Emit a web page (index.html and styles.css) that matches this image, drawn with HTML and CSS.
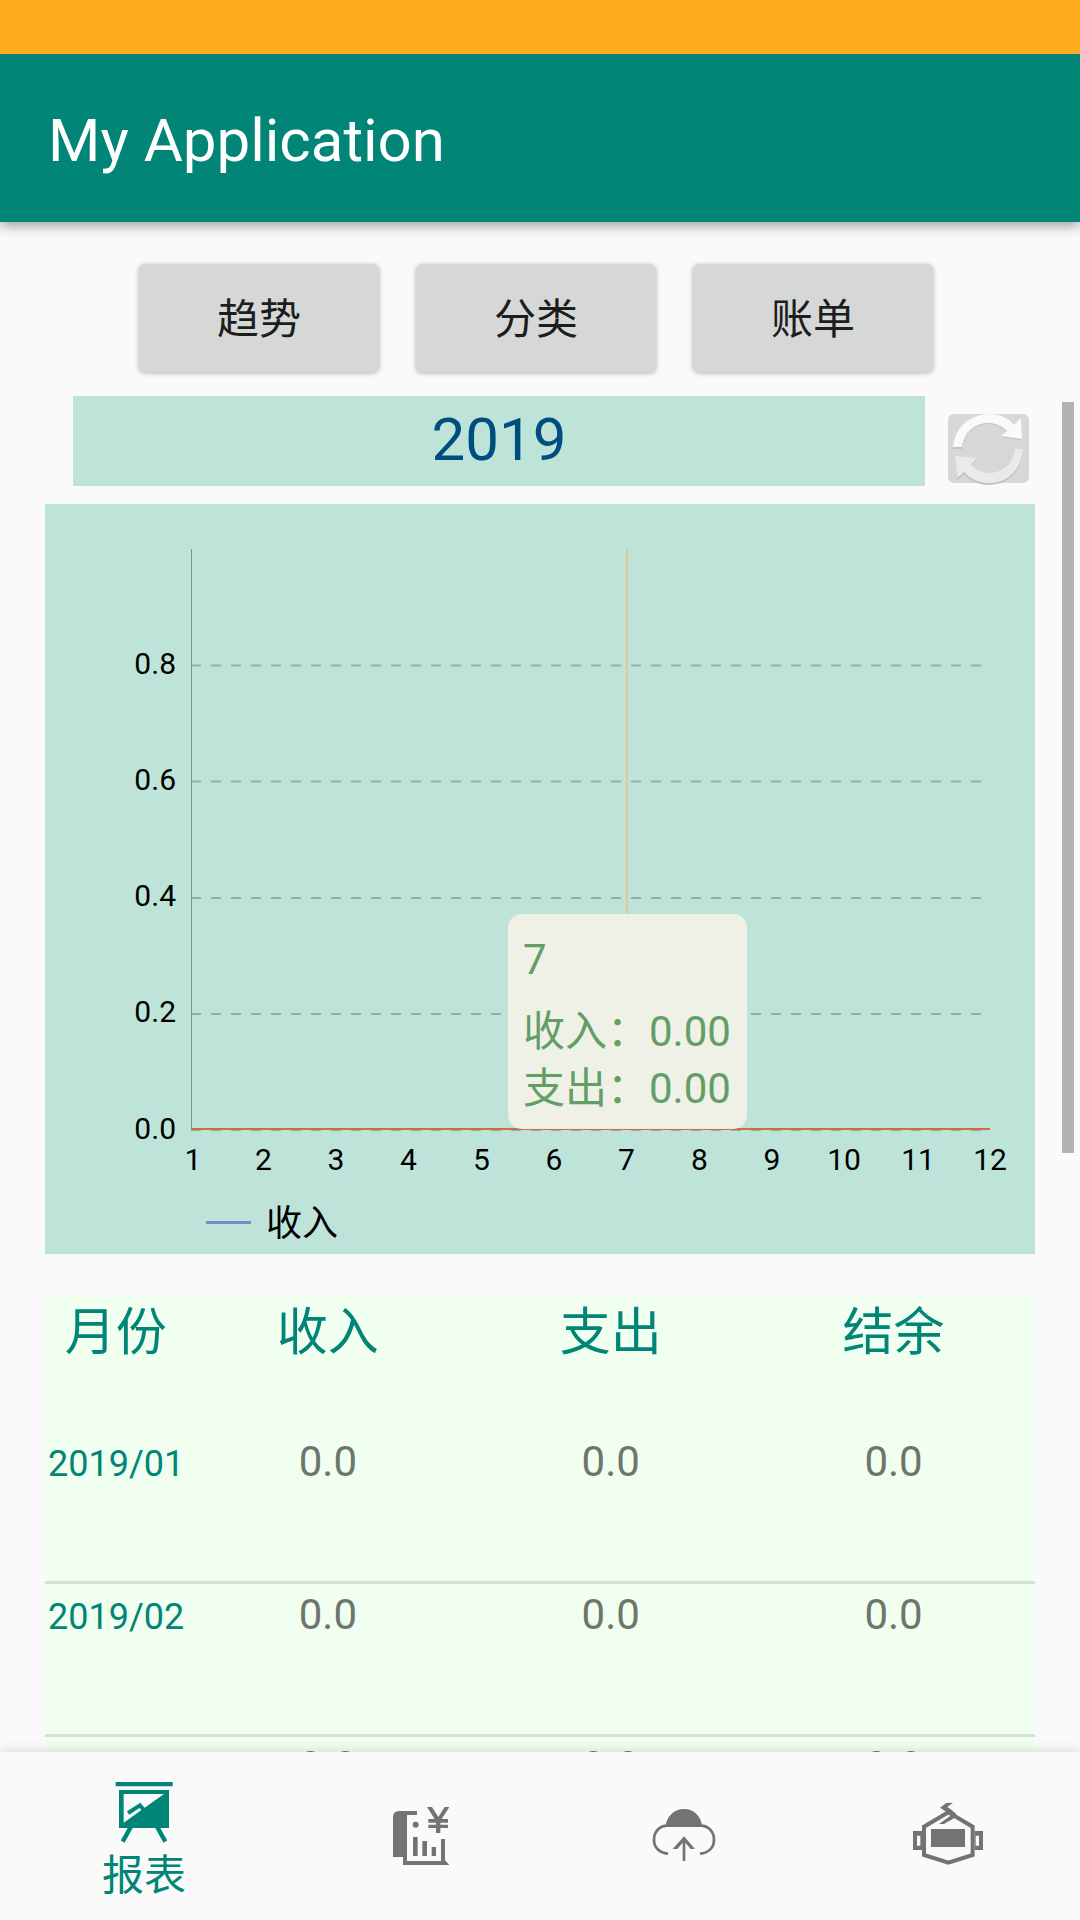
FILE: index.html
```html
<!DOCTYPE html>
<html lang="zh-CN">
<head>
    <meta charset="UTF-8">
    <meta name="viewport" content="width=device-width, initial-scale=1.0">
    <title>My Application</title>
    <link rel="stylesheet" href="styles.css">
</head>
<body>
    <div class="status-bar"></div>
    <header class="app-bar">
        <h1>My Application</h1>
    </header>

    <main class="content">
        <!-- tabs -->
        <div class="tabs">
            <button class="tab">趋势</button>
            <button class="tab">分类</button>
            <button class="tab">账单</button>
        </div>

        <!-- year + refresh -->
        <div class="year-row">
            <div class="year">2019</div>
            <button class="refresh">
                <svg width="81" height="72" viewBox="0 0 81 72">
                    <g class="refresh-shadow">
                        <path d="M5 35 C7 13 23 1 42 1 C52 1 60 5 66 12 L73 5 L74 26 L53 23 L59 18 C54 13 48 10 40 10 C27 10 16 19 14 35 Z"/>
                        <path d="M75 36 C74 57 60 71 41 71 C31 71 22 67 16 60 L9 66 L7 43 L29 45 L23 52 C28 57 34 60 41 60 C55 60 65 51 67 36 Z"/>
                    </g>
                    <path class="arrow-top" d="M5 33 C7 12 23 0 42 0 C52 0 60 4 66 11 L73 4 L74 25 L53 22 L59 17 C54 12 48 9 40 9 C27 9 16 18 14 33 Z"/>
                    <path class="arrow-bottom" d="M75 35 C74 55 60 69 41 69 C31 69 22 65 16 58 L9 64 L7 42 L29 44 L23 51 C28 56 34 59 41 59 C55 59 65 50 67 35 Z"/>
                </svg>
            </button>
        </div>

        <!-- line chart -->
        <section class="chart">
            <svg width="990" height="750" viewBox="0 0 990 750">
                <g class="grid">
                    <path d="M146 161.5 H937"/>
                    <path d="M146 277.5 H937"/>
                    <path d="M146 394 H937"/>
                    <path d="M146 510 H937"/>
                    <path d="M146 626 H937"/>
                </g>
                <path class="axis" d="M146.5 45 V626"/>
                <path class="series" d="M147 625 H945"/>
                <path class="cursor" d="M582 45 V624"/>
                <g class="labels-y">
                    <text x="131" y="170">0.8</text>
                    <text x="131" y="286">0.6</text>
                    <text x="131" y="402">0.4</text>
                    <text x="131" y="518">0.2</text>
                    <text x="131" y="635">0.0</text>
                </g>
                <g class="labels-x">
                    <text x="148" y="666">1</text>
                    <text x="218.5" y="666">2</text>
                    <text x="291" y="666">3</text>
                    <text x="363.5" y="666">4</text>
                    <text x="436.5" y="666">5</text>
                    <text x="509" y="666">6</text>
                    <text x="581.5" y="666">7</text>
                    <text x="654.5" y="666">8</text>
                    <text x="727" y="666">9</text>
                    <text x="799" y="666">10</text>
                    <text x="873" y="666">11</text>
                    <text x="945" y="666">12</text>
                </g>
                <path class="legend-line" d="M161 718.5 H206"/>
                <text class="legend-text" x="221" y="732">收入</text>
            </svg>
            <div class="tooltip">
                <p class="tooltip-title">7</p>
                <p>收入：0.00</p>
                <p>支出：0.00</p>
            </div>
        </section>

        <!-- monthly table -->
        <section class="table">
            <div class="row head">
                <span>月份</span><span>收入</span><span>支出</span><span>结余</span>
            </div>
            <div class="row">
                <span class="month">2019/01</span><span>0.0</span><span>0.0</span><span>0.0</span>
            </div>
            <div class="row">
                <span class="month">2019/02</span><span>0.0</span><span>0.0</span><span>0.0</span>
            </div>
            <div class="row last">
                <span class="month">2019/03</span><span>0.0</span><span>0.0</span><span>0.0</span>
            </div>
        </section>
        <div class="scrollbar"></div>
    </main>

    <nav class="bottom-nav">
        <a class="nav-item active">
            <svg width="72" height="72" viewBox="84 108 216 216">
                <path d="M107 126 H278 V139 H107 Z"/>
                <path fill-rule="evenodd" d="M117 150 H267 V264 H117 Z M131 162 V248 L196 202 L252 162 Z"/>
                <path class="line" d="M144 219 L180 196 L190 208"/>
                <path class="line thick" d="M153 260 L128 305 M231 260 L256 305"/>
            </svg>
            <span>报表</span>
        </a>
        <a class="nav-item">
            <svg width="72" height="72" viewBox="912 180 216 216">
                <path fill-rule="evenodd" d="M957 213 H1011 V225 H981 V363 H1083 V297 H1095 V361 L1108 375 H969 V351 H939 V231 Q939 213 957 213 Z"/>
                <circle cx="1007" cy="254" r="9"/>
                <path d="M999 291 H1013 V348 H999 Z M1027 303 H1041 V348 H1027 Z M1055 321 H1068 V348 H1055 Z"/>
                <path d="M1041 201 H1056 L1075 231 L1094 201 H1108 L1085 237 H1104 V248 H1081 V254 H1104 V264 H1081 V279 H1068 V264 H1045 V254 H1068 V248 H1045 V237 H1064 Z"/>
            </svg>
        </a>
        <a class="nav-item">
            <svg width="72" height="72" viewBox="84 180 216 216">
                <path d="M136 261 C140 228 162 207 192 207 C222 207 243 228 247 261 Z"/>
                <path class="line cloud" d="M144 341 C118 339 102 322 102 299 C102 274 120 257 142 257 H242 C265 257 282 275 282 299 C282 323 266 339 240 341"/>
                <path class="line cloud" d="M192 363 V296"/>
                <path d="M192 289 L225 327 H212 L192 304 L172 327 H158 Z"/>
            </svg>
        </a>
        <a class="nav-item">
            <svg width="72" height="72" viewBox="876 180 216 216">
                <path class="line" d="M985 217 L912 260 V345 L985 368 L1058 345 V260 Z"/>
                <path d="M933 267 H1035 V321 H933 Z"/>
                <path fill-rule="evenodd" d="M879 273 H906 V330 H879 Z M891 287 V317 H901 V287 Z M1064 273 H1089 V330 H1064 Z M1067 287 V317 H1077 V287 Z"/>
                <path d="M999 188 L982 201 L994 209 L1009 222 L1003 234 L972 252 H957 L995 225 L988 221 L960 203 L979 189 Z"/>
            </svg>
        </a>
    </nav>
</body>
</html>
```

FILE: styles.css
```css
* {
    box-sizing: border-box;
    margin: 0;
    padding: 0;
}

body {
    width: 1080px;
    height: 1920px;
    overflow: hidden;
    display: flex;
    flex-direction: column;
    background: #fafafa;
    font-family: Roboto, "Noto Sans CJK SC", sans-serif;
}

svg {
    display: block;
}

.status-bar {
    position: relative;
    z-index: 1;
    height: 54px;
    background: #ffad20;
}

.app-bar {
    height: 168px;
    padding-left: 48px;
    display: flex;
    align-items: center;
    background: #008577;
    box-shadow: 0 4px 12px rgba(0, 0, 0, 0.36);
}

.app-bar h1 {
    color: #fff;
    font-size: 60px;
    font-weight: 400;
    line-height: 70px;
    padding-top: 6px;
}

.content {
    height: 1530px;
    overflow: hidden;
    position: relative;
    padding: 42px 45px 0;
}

/* tabs */
.tabs {
    display: flex;
    gap: 37px;
    padding-left: 94px;
}

.tab {
    width: 240px;
    height: 108px;
    padding-bottom: 5px;
    border: none;
    border-radius: 6px;
    background: #d6d7d7;
    color: #1c1d1d;
    font-family: inherit;
    font-size: 42px;
    box-shadow: 0 1px 5px rgba(0, 0, 0, 0.3);
}

/* year */
.year-row {
    display: flex;
    height: 90px;
    margin-top: 24px;
    padding-left: 28px;
}

.year {
    width: 852px;
    height: 90px;
    line-height: 88px;
    text-align: center;
    font-size: 60px;
    color: #004d80;
    background: #bee4da;
}

.refresh {
    width: 81px;
    height: 69px;
    margin: 18px 0 0 23px;
    border: none;
    border-radius: 6px;
    background: #d6d7d7;
}

.refresh-shadow {
    fill: #c0c1c1;
}

.arrow-top {
    fill: #fafafa;
}

.arrow-bottom {
    fill: #e9eaea;
}

/* chart */
.chart {
    position: relative;
    height: 750px;
    margin-top: 18px;
    background: #bee4da;
}

.grid path {
    stroke: #93aea7;
    stroke-width: 2;
    stroke-dasharray: 10 10;
}

.axis {
    stroke: #7f8f8b;
    stroke-width: 1;
}

.series {
    stroke: #cd6d41;
    stroke-width: 2;
}

.cursor {
    stroke: #e3c78b;
    stroke-width: 2;
}

.labels-x,
.labels-y {
    font-size: 30px;
    fill: #000;
}

.labels-x {
    text-anchor: middle;
}

.labels-y {
    text-anchor: end;
}

.legend-line {
    stroke: #7191c6;
    stroke-width: 3;
}

.legend-text {
    font-size: 36px;
}

.tooltip {
    position: absolute;
    left: 463px;
    top: 410px;
    width: 239px;
    height: 215px;
    padding: 17px 0 0 15px;
    border-radius: 14px;
    background: rgba(241, 241, 232, 0.95);
    color: #629e66;
    font-size: 42px;
    line-height: 57px;
    white-space: nowrap;
}

.tooltip-title {
    margin-bottom: 15px;
}

/* table */
.table {
    margin-top: 42px;
    background: #f0fff0;
}

.row {
    display: grid;
    grid-template-columns: 1fr 2fr 2fr 2fr;
    height: 153px;
    align-items: baseline;
    padding-top: 6px;
    border-bottom: 3px solid #d3e1d3;
    text-align: center;
    font-size: 42px;
    line-height: 50px;
    color: #6c766c;
}

.row .month {
    font-size: 36px;
    text-align: left;
    padding-left: 3px;
    color: #008577;
}

.row.head {
    height: 135px;
    padding-top: 2px;
    border-bottom: none;
    font-size: 51px;
    line-height: 70px;
    color: #008577;
}

.row.last {
    padding-top: 5px;
}

.scrollbar {
    position: absolute;
    right: 6px;
    top: 180px;
    width: 12px;
    height: 751px;
    background: #b2b2b2;
}

/* bottom navigation */
.bottom-nav {
    position: relative;
    height: 168px;
    display: flex;
    background: #fafafa;
    box-shadow: 0 0 12px rgba(0, 0, 0, 0.16);
}

.nav-item {
    width: 264px;
    display: flex;
    flex-direction: column;
    align-items: center;
    padding-top: 48px;
    color: #737373;
}

.nav-item.active {
    width: 288px;
    padding-top: 24px;
    color: #008577;
    font-size: 42px;
    line-height: 56px;
}

.nav-item svg {
    fill: currentColor;
}

.nav-item .line {
    fill: none;
    stroke: currentColor;
    stroke-width: 12;
}

.nav-item .thick {
    stroke-width: 13;
}

.nav-item .cloud {
    stroke-width: 8;
}
```
